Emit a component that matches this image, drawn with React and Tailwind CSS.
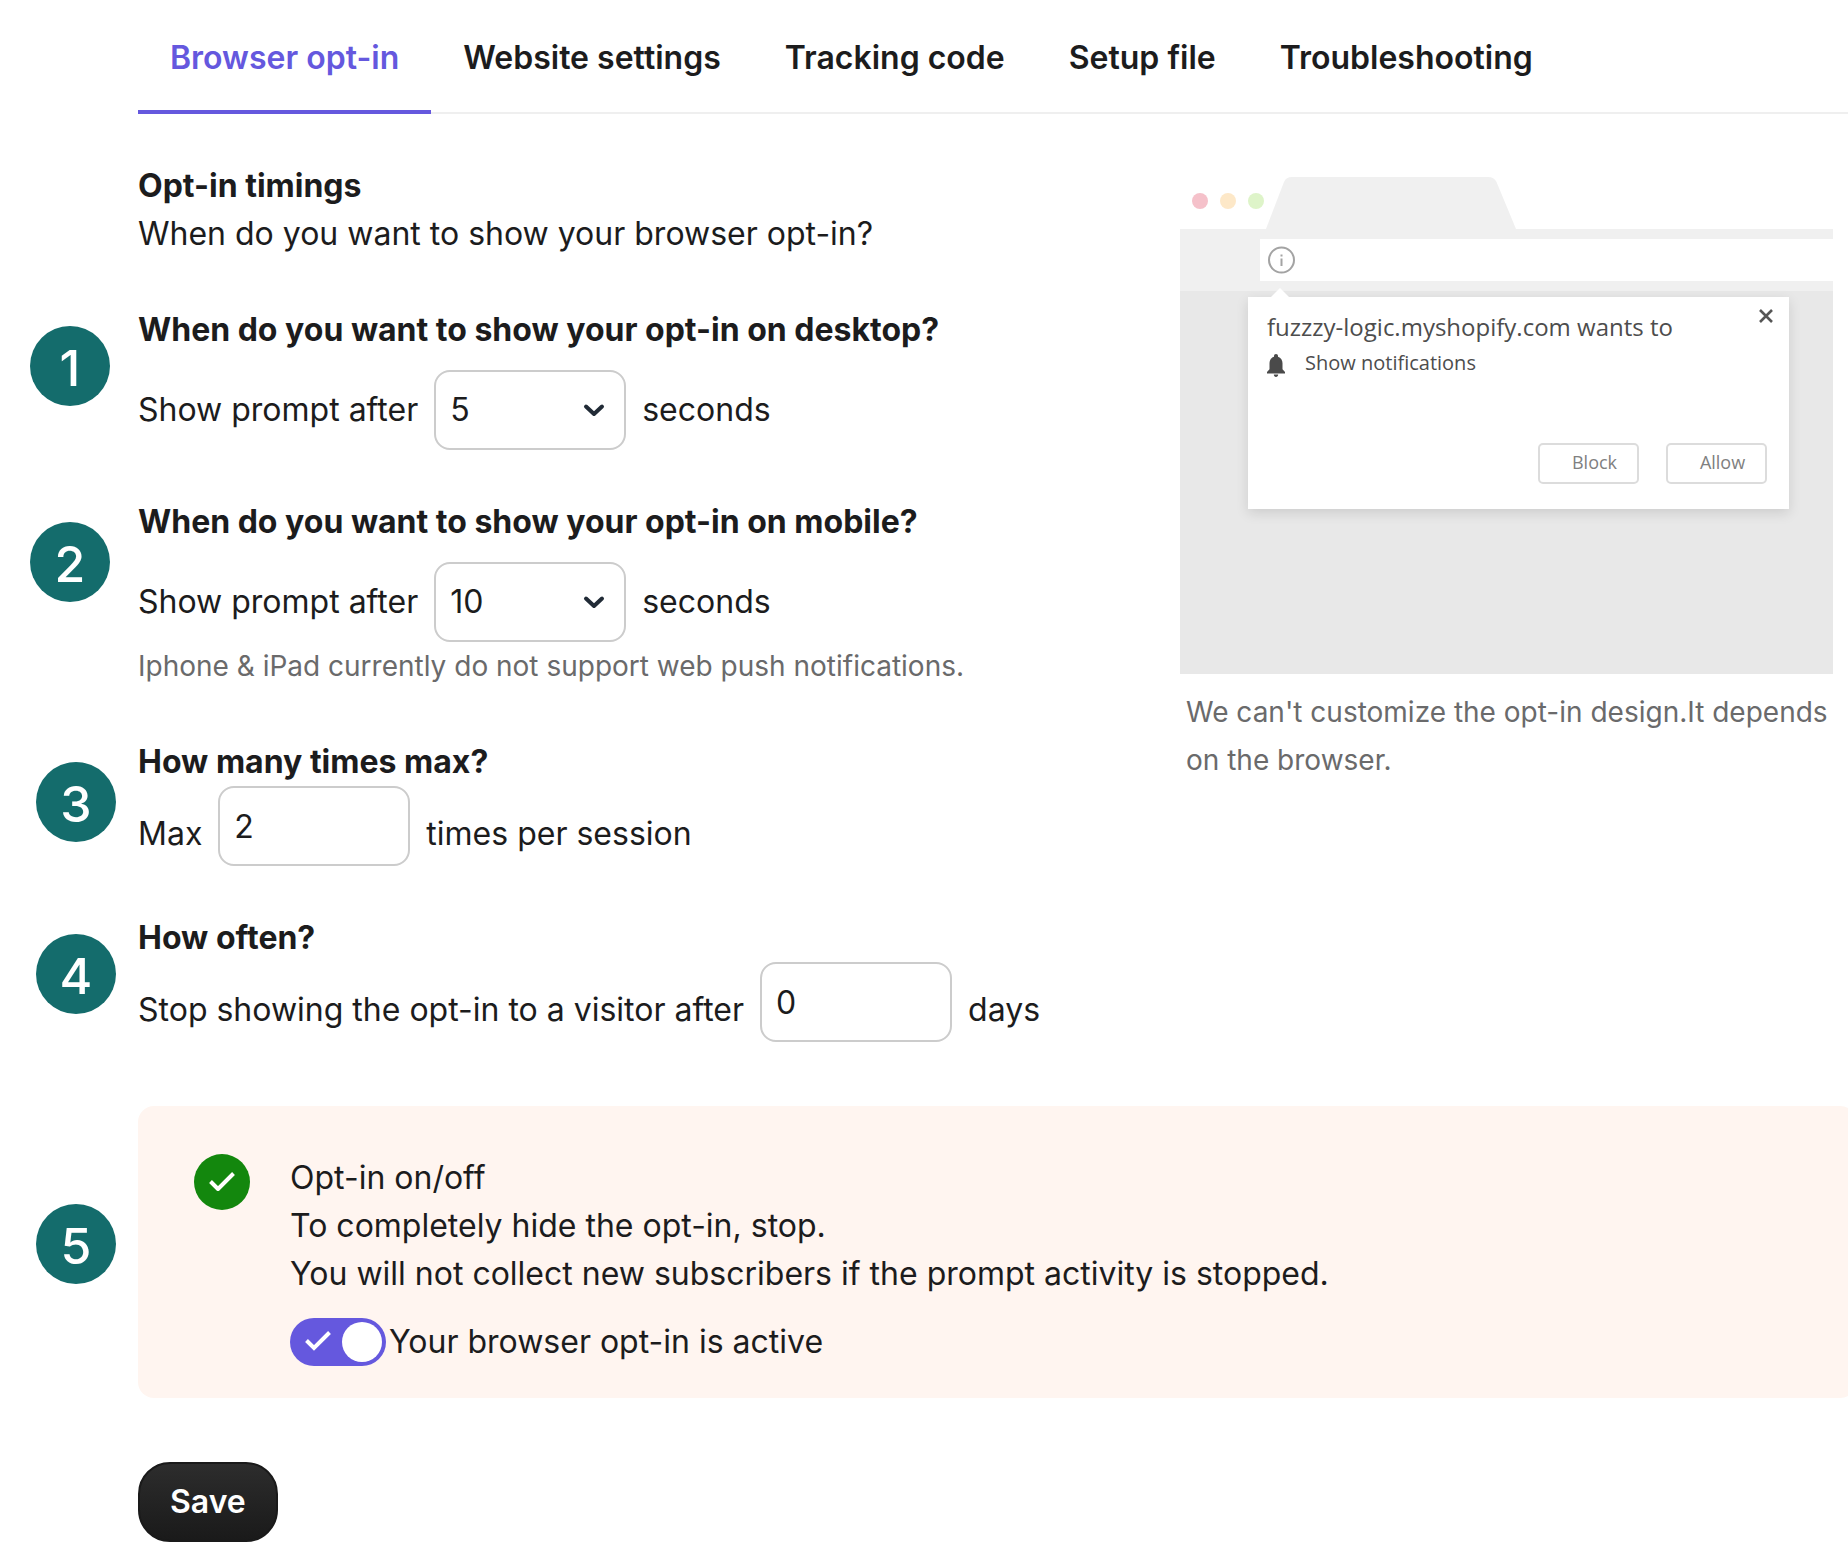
import { useState } from 'react';
import clsx from 'clsx';

const tabs = ['Browser opt-in', 'Website settings', 'Tracking code', 'Setup file', 'Troubleshooting'];

const StepBadge = ({ number }) => (
    <span className="flex size-20 items-center justify-center rounded-full bg-[#146c6c] pt-1 text-[50px] leading-none font-medium text-white">
        {number}
    </span>
);

// Gutter column with the step number, then the setting itself
const Step = ({ number, gutter, className, children }) => (
    <div className={clsx('flex', className)}>
        <div className={clsx('w-[138px] shrink-0', gutter)}>{number && <StepBadge number={number} />}</div>
        <div className="min-w-0 flex-1">{children}</div>
    </div>
);

const SecondsSelect = ({ id, value, onChange }) => (
    <div className="mt-4 flex items-center gap-4">
        <label htmlFor={id}>Show prompt after</label>
        <div className="relative">
            <select
                id={id}
                value={value}
                onChange={(e) => onChange(e.target.value)}
                className="block h-20 w-48 appearance-none rounded-2xl border-2 border-[#cccccc] bg-white px-[14px]"
            >
                <option>0</option>
                <option>5</option>
                <option>10</option>
                <option>15</option>
                <option>30</option>
            </select>
            <svg viewBox="0 0 24 16" className="pointer-events-none absolute top-8 right-5 h-4 w-6" fill="none">
                <path d="M4 4.5l8 7.500 8-7.500" stroke="#212b36" strokeWidth="4" strokeLinecap="round" strokeLinejoin="round" />
            </svg>
        </div>
        <span>seconds</span>
    </div>
);

const NumberField = ({ id, before, after, value, onChange }) => (
    <div className="flex gap-4">
        <label htmlFor={id} className="pt-6">{before}</label>
        <input
            id={id}
            type="text"
            inputMode="numeric"
            value={value}
            onChange={(e) => onChange(e.target.value)}
            className="h-20 w-48 rounded-2xl border-2 border-[#cccccc] bg-white px-[14px]"
        />
        <span className="pt-6">{after}</span>
    </div>
);

const BrowserPreview = () => (
    <div className="font-['Open_Sans',sans-serif] text-[#4d4d4d]">
        <div className="flex h-[52px]">
            <div className="flex h-12 items-center gap-3 pl-3">
                <span className="size-4 rounded-full bg-[#f5c1ca]" />
                <span className="size-4 rounded-full bg-[#fde8c8]" />
                <span className="size-4 rounded-full bg-[#def4c9]" />
            </div>
            <svg viewBox="0 0 252 52" className="h-[52px] w-[252px]">
                <path d="M2 52L20 5Q22 0 28 0H224Q230 0 232.500 5L252 52Z" fill="#f0f0f0" />
            </svg>
        </div>
        <div className="bg-[#f0f0f0] py-[10px] pl-20">
            <div className="flex h-[42px] items-center bg-white pl-2">
                <svg viewBox="0 0 28 28" className="size-7" fill="none" stroke="#a3a3a3">
                    <circle cx="13.500" cy="14" r="12.500" strokeWidth="2" />
                    <path d="M13.500 12.500v7.500M13.500 8.500v2" strokeWidth="2" />
                </svg>
            </div>
        </div>
        <div className="h-[383px] bg-[#e8e8e8] pt-[6px] pr-11 pl-[68px]">
            <div className="relative h-[212px] bg-white pt-3 pl-[19px] shadow-[0_4px_12px_rgba(0,0,0,0.12)]">
                <svg viewBox="0 0 20 10" className="absolute -top-[9px] left-[22px] h-[10px] w-5">
                    <path d="M0 10L10 0L20 10Z" fill="#ffffff" />
                </svg>
                <button aria-label="Close" className="absolute top-3 right-4 size-[14px]">
                    <svg viewBox="0 0 14 14" className="size-[14px]" stroke="#555555" strokeWidth="2.600">
                        <path d="M1 1l12 12M13 1L1 13" />
                    </svg>
                </button>
                <p className="text-2xl leading-9">fuzzzy-logic.myshopify.com wants to</p>
                <div className="flex items-center gap-5 text-xl leading-9">
                    <svg viewBox="0 0 18 23" className="mt-1 h-[23px] w-[18px]" fill="#4a4a4a">
                        <path d="M9 0c1.200 0 2 .8 2 2v.7c3 .9 4.500 3.500 4.500 6.600v6l2.500 2.700v1.500H0V18l2.500-2.700v-6C2.500 6.200 4 3.600 7 2.700V2c0-1.200.8-2 2-2zM6.800 20.500h4.400c0 1.400-1 2.500-2.200 2.500s-2.200-1.100-2.200-2.500z" />
                    </svg>
                    Show notifications
                </div>
                <div className="absolute right-[22px] bottom-[25px] flex gap-[27px] text-lg text-[#808080]">
                    <button className="h-[41px] w-[101px] rounded-[5px] border-2 border-[#dcdcdc] pb-1 pl-3">Block</button>
                    <button className="h-[41px] w-[101px] rounded-[5px] border-2 border-[#dcdcdc] pb-1 pl-3">Allow</button>
                </div>
            </div>
        </div>
    </div>
);

const App = () => {
    const [activeTab, setActiveTab] = useState('Browser opt-in');
    const [desktopDelay, setDesktopDelay] = useState('5');
    const [mobileDelay, setMobileDelay] = useState('10');
    const [maxTimes, setMaxTimes] = useState('2');
    const [stopAfter, setStopAfter] = useState('0');
    const [isActive, setIsActive] = useState(true);

    return (
        <div className="min-h-screen overflow-hidden bg-white pb-5 font-['Inter',sans-serif] text-[32px] leading-[48px] text-[#1c1c1d]">
            <nav className="ml-[138px] flex h-[114px] border-b-2 border-[#efefef]">
                {tabs.map(tab => (
                    <button
                        key={tab}
                        onClick={() => setActiveTab(tab)}
                        className={clsx(
                            'h-[114px] shrink-0 border-b-4 px-8 pt-[6px] font-semibold',
                            activeTab === tab ? 'border-[#6558de] text-[#6558de]' : 'border-transparent'
                        )}
                    >
                        {tab}
                    </button>
                ))}
            </nav>

            <div className="flex pt-12">
                <div className="min-w-0 flex-1">
                    <Step>
                        <h2 className="font-bold">Opt-in timings</h2>
                        <p>When do you want to show your browser opt-in?</p>
                    </Step>

                    <Step number={1} gutter="pt-5 pl-[30px]" className="mt-12">
                        <h3 className="font-bold">When do you want to show your opt-in on desktop?</h3>
                        <SecondsSelect id="desktop-delay" value={desktopDelay} onChange={setDesktopDelay} />
                    </Step>

                    <Step number={2} gutter="pt-6 pl-[30px]" className="mt-12">
                        <h3 className="font-bold">When do you want to show your opt-in on mobile?</h3>
                        <SecondsSelect id="mobile-delay" value={mobileDelay} onChange={setMobileDelay} />
                        <p className="text-[28px] text-[#6a6a6b]">Iphone &amp; iPad currently do not support web push notifications.</p>
                    </Step>

                    <Step number={3} gutter="pt-6 pl-9" className="mt-12">
                        <h3 className="font-bold">How many times max?</h3>
                        <NumberField id="max-times" before="Max" after="times per session" value={maxTimes} onChange={setMaxTimes} />
                    </Step>

                    <Step number={4} gutter="pt-5 pl-9" className="mt-12">
                        <h3 className="font-bold">How often?</h3>
                        <NumberField id="stop-after" before="Stop showing the opt-in to a visitor after" after="days" value={stopAfter} onChange={setStopAfter} />
                    </Step>
                </div>

                <aside className="mr-[15px] w-[653px] shrink-0 pt-[15px]">
                    <BrowserPreview />
                    <p className="mt-[14px] pl-[6px] text-[28px] text-[#6a6a6b]">
                        We can't customize the opt-in design.It depends on the browser.
                    </p>
                </aside>
            </div>

            {/* The card runs a little past the right edge of the window */}
            <Step number={5} gutter="pt-[98px] pl-9" className="mt-16 -mr-2">
                <div className="flex gap-10 rounded-2xl bg-[#fff5f0] pt-12 pb-8 pl-14">
                    <span className="flex size-14 shrink-0 items-center justify-center rounded-full bg-[#13870d]">
                        <svg viewBox="0 0 28 22" className="h-[22px] w-7" fill="none" stroke="#ffffff" strokeWidth="4">
                            <path d="M2.500 10.500l7.500 7.500L25.500 2.500" strokeLinejoin="round" />
                        </svg>
                    </span>
                    <div>
                        <p>Opt-in on/off</p>
                        <p>To completely hide the opt-in, stop.</p>
                        <p>You will not collect new subscribers if the prompt activity is stopped.</p>
                        <label className="mt-5 flex items-center gap-[3px]">
                            <span className="relative h-12 w-24">
                                <input
                                    type="checkbox"
                                    checked={isActive}
                                    onChange={(e) => setIsActive(e.target.checked)}
                                    className="peer block h-12 w-24 appearance-none rounded-full bg-gray-400 checked:bg-[#6558de]"
                                />
                                <svg viewBox="0 0 26 20" className="pointer-events-none absolute top-[13px] left-[15px] h-5 w-[26px]" fill="none" stroke="#ffffff" strokeWidth="4">
                                    <path d="M1.500 9.500l7.500 7.500L24.500 1.500" />
                                </svg>
                                <span className="pointer-events-none absolute top-1 left-1 size-10 rounded-full bg-white peer-checked:left-[52px]" />
                            </span>
                            Your browser opt-in is active
                        </label>
                    </div>
                </div>
            </Step>

            <button className="mt-16 ml-[138px] h-20 rounded-[32px] border-2 border-[#1a1a1a] bg-linear-to-b from-[#2d2d2d] to-[#1a1a1a] px-[30px] font-semibold text-white">
                Save
            </button>
        </div>
    );
};

export default App;
